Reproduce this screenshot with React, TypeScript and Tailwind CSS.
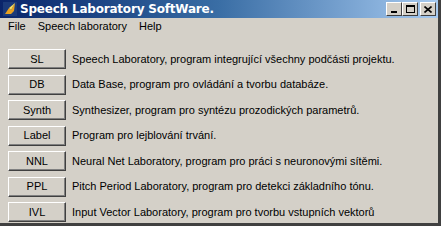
const rows = [
  ["SL", "Speech Laboratory, program integrující všechny podčásti projektu."],
  ["DB", "Data Base, program pro ovládání a tvorbu databáze."],
  ["Synth", "Synthesizer, program pro syntézu prozodických parametrů."],
  ["Label", "Program pro lejblování trvání."],
  ["NNL", "Neural Net Laboratory, program pro práci s neuronovými sítěmi."],
  ["PPL", "Pitch Period Laboratory, program pro detekci základního tónu."],
  ["IVL", "Input Vector Laboratory, program pro tvorbu vstupních vektorů"],
];

function WinButton({ children }: { children: React.ReactNode }) {
  return (
    <div className="w-[16px] h-[14px] bg-[#d4d0c8] border border-t-white border-l-white border-r-[#404040] border-b-[#404040] flex items-center justify-center text-black">
      {children}
    </div>
  );
}

export default function App() {
  return (
    <div className="w-[441px] h-[226px] bg-[#d4d0c8] flex flex-col overflow-hidden font-['Liberation_Sans',Arial,sans-serif] border-r-[3px] border-b-[3px] border-r-[#404040] border-b-[#404040]">
      {/* title bar */}
      <div className="h-[18px] flex items-center pl-[3px] pr-[2px] bg-gradient-to-r from-[#0a246a] via-[#3a6ea5] to-[#a6caf0]">
        <svg width="14" height="14" viewBox="0 0 14 14" className="shrink-0">
          <rect width="14" height="14" fill="#1b3a7a" />
          <path d="M2 12 L6 6 L8 8 L12 1 L11 9 L8 12 Z" fill="#e8a020" />
          <path d="M6 6 L8 8 L12 1 Z" fill="#f8e060" />
        </svg>
        <span className="ml-[3px] text-white font-bold text-[12px] font-['DejaVu_Sans',sans-serif] tracking-[-0.2px] leading-none">
          Speech Laboratory SoftWare.
        </span>
        <div className="ml-auto flex items-center">
          <WinButton>
            <div className="w-[6px] h-[2px] bg-black mt-[5px]" />
          </WinButton>
          <WinButton>
            <div className="w-[9px] h-[8px] border border-t-2 border-black" />
          </WinButton>
          <div className="ml-[2px]">
            <WinButton>
              <svg width="8" height="7" viewBox="0 0 8 7">
                <path d="M0.5 0.5 L7.5 6.5 M7.5 0.5 L0.5 6.5" stroke="black" strokeWidth="1.6" />
              </svg>
            </WinButton>
          </div>
        </div>
      </div>

      {/* menu bar */}
      <div className="h-[17px] flex items-center text-[11px] text-black pl-[3px]">
        <span className="px-[5px]">File</span>
        <span className="px-[5px] ml-[2px]">Speech laboratory</span>
        <span className="px-[5px] ml-[2px]">Help</span>
      </div>

      {/* content */}
      <div className="flex-1 flex flex-col gap-[5.5px] pt-[14px] pl-[8px] pr-[8px]">
        {rows.map(([label, desc]) => (
          <div key={label} className="flex items-center h-[20px]">
            <div className="w-[58px] h-[20px] shrink-0 flex items-center justify-center text-[11px] text-black border border-t-white border-l-white border-r-[#404040] border-b-[#404040] shadow-[inset_-1px_-1px_0_#808080]">
              {label}
            </div>
            <div className="ml-[6px] text-[11px] text-black whitespace-nowrap">{desc}</div>
          </div>
        ))}
      </div>
    </div>
  );
}
